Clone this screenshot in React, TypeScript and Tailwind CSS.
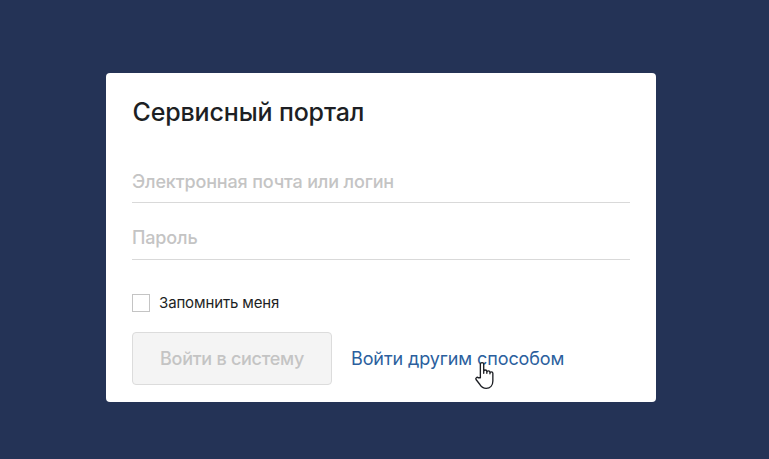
export default function App() {
  return (
    <div className="min-h-[459px] bg-[#243356] pt-[73px] pl-[106px] font-['Inter','Liberation_Sans',sans-serif]">
      <div className="w-[550px] h-[329px] bg-white rounded-[4px] pl-[26px] pr-[26px] pt-[23px]">
        <h1 className="text-[25px] leading-[32px] font-[550] tracking-[-0.15px] text-[#1d1f24] pl-[0.5px]">Сервисный портал</h1>

        <div className="mt-[26px] h-[49px] border-b border-[#d9d9d9] pt-[15px] text-[18px] leading-[26px] font-[450] tracking-[-0.15px] text-[#c4c4c4]">
          Электронная почта или логин
        </div>
        <div className="mt-[7px] h-[50px] border-b border-[#d9d9d9] pt-[15px] text-[18px] leading-[26px] font-[450] tracking-[-0.15px] text-[#c4c4c4]">
          Пароль
        </div>

        <div className="mt-[34px] flex items-center gap-[9px]">
          <div className="w-[18px] h-[18px] border border-[#c4c4c4] bg-white" />
          <span className="text-[15px] leading-[18px] tracking-[-0.13px] text-[#1d1f24]">Запомнить меня</span>
        </div>

        <div className="relative mt-[20px] flex items-center gap-[19px]">
          <div className="w-[200px] h-[53px] flex items-center justify-center rounded-[4px] border border-[#dcdcdc] bg-[#f4f4f4] text-[18px] font-medium tracking-[-0.27px] text-[#c4c4c4]">
            Войти в систему
          </div>
          <span className="text-[18px] tracking-[-0.1px] text-[#2b5f9e]">Войти другим способом</span>
          <svg className="absolute left-[342px] top-[29px]" width="25" height="29" viewBox="0 0 22 26" fill="#fff" stroke="#1d1f24" strokeWidth="1.2" strokeLinejoin="round">
            <path d="M5.5 15V3a1.5 1.5 0 0 1 3 0v8V9.5a1.4 1.4 0 0 1 2.8 0V11v-.8a1.4 1.4 0 0 1 2.8 0v1.2-.4a1.3 1.3 0 0 1 2.6 0V18c0 4-2.4 6.5-6 6.5-3 0-4.4-1.4-5.6-3.4L1.6 16.6c-.8-1.3 1-2.6 2-1.6z" />
          </svg>
        </div>
      </div>
    </div>
  );
}
